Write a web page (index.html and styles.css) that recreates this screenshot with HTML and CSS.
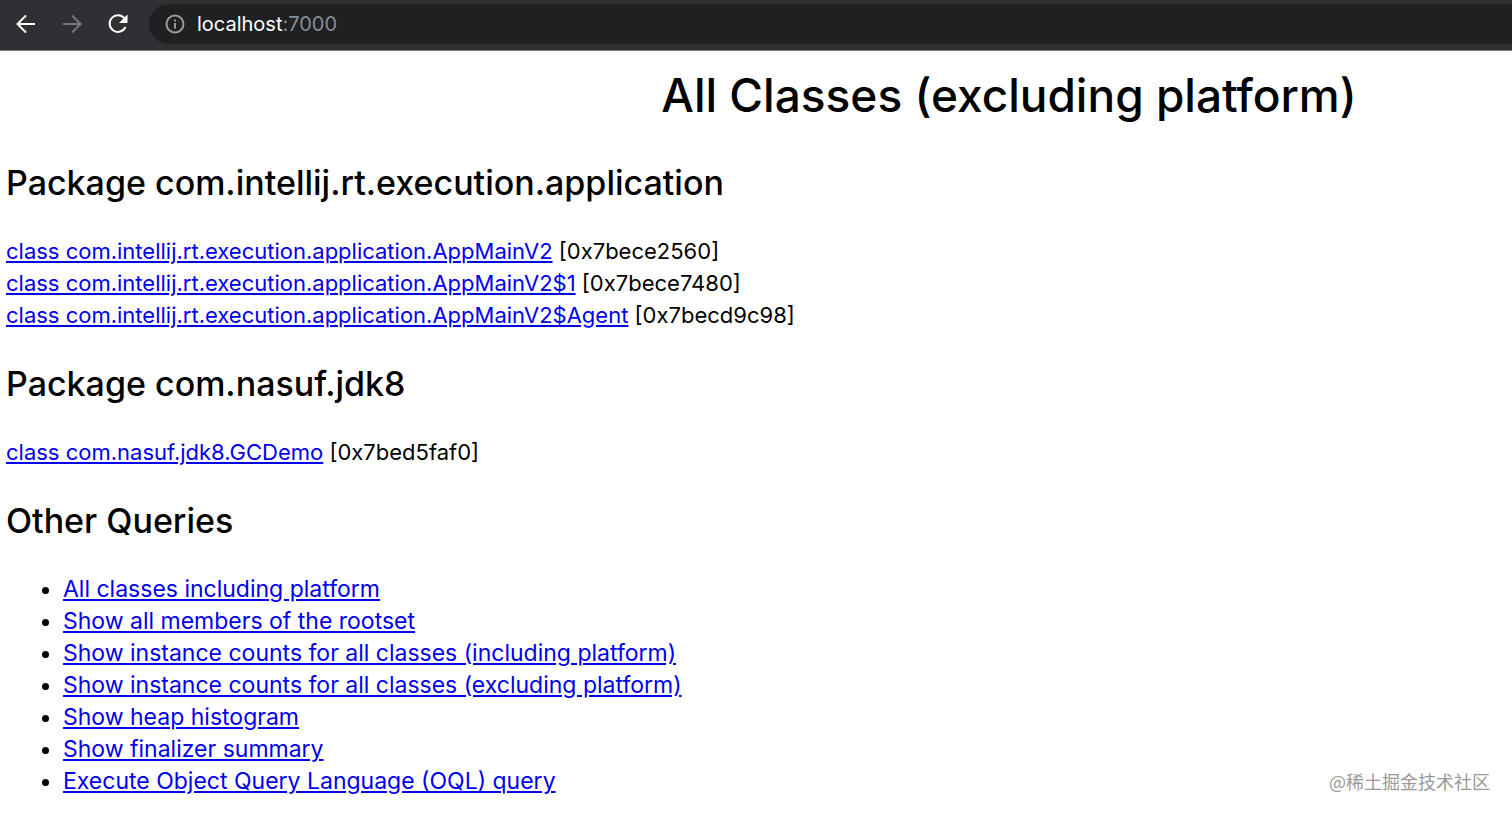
FILE: index.html
```html
<!DOCTYPE html>
<html lang="en">
<head>
    <meta charset="UTF-8">
    <meta name="viewport" content="width=device-width, initial-scale=1.0">
    <title>All Classes (excluding platform)</title>
    <link rel="stylesheet" href="styles.css">
</head>
<body>
    <header class="toolbar">
        <button type="button" class="nav-button" aria-label="Back">
            <svg viewBox="0 0 24 24"><path d="M21 12H4M12 3.500L3.500 12l8.500 8.500"/></svg>
        </button>
        <button type="button" class="nav-button disabled" aria-label="Forward" disabled>
            <svg viewBox="0 0 24 24"><path d="M3 12h17M12 3.500l8.500 8.500-8.500 8.500"/></svg>
        </button>
        <button type="button" class="nav-button" aria-label="Reload">
            <svg viewBox="0 0 24 24"><path d="M18.500 6.500A8.300 8.300 0 1 0 19.500 15"/><path class="solid" d="M21.500 2.500v8.500H13z"/></svg>
        </button>
        <div class="address">
            <svg class="info" viewBox="0 0 20 20"><circle cx="10" cy="10" r="8.500"/><path d="M10 9v5.500M10 5.500v2"/></svg>
            <span class="url">localhost<span class="port">:7000</span></span>
        </div>
    </header>

    <main class="content">
        <h1>All Classes (excluding platform)</h1>

        <h2>Package com.intellij.rt.execution.application</h2>
        <p>
            <a href="#">class com.intellij.rt.execution.application.AppMainV2</a> [0x7bece2560]<br>
            <a href="#">class com.intellij.rt.execution.application.AppMainV2$1</a> [0x7bece7480]<br>
            <a href="#">class com.intellij.rt.execution.application.AppMainV2$Agent</a> [0x7becd9c98]
        </p>

        <h2>Package com.nasuf.jdk8</h2>
        <p><a href="#">class com.nasuf.jdk8.GCDemo</a> [0x7bed5faf0]</p>

        <h2>Other Queries</h2>
        <ul>
            <li><a href="#">All classes including platform</a></li>
            <li><a href="#">Show all members of the rootset</a></li>
            <li><a href="#">Show instance counts for all classes (including platform)</a></li>
            <li><a href="#">Show instance counts for all classes (excluding platform)</a></li>
            <li><a href="#">Show heap histogram</a></li>
            <li><a href="#">Show finalizer summary</a></li>
            <li><a href="#">Execute Object Query Language (OQL) query</a></li>
        </ul>
    </main>

    <div class="watermark">@稀土掘金技术社区</div>
</body>
</html>
```
FILE: styles.css
```css
body {
    margin: 0;
    background: #fff;
    color: #000;
    font-family: Inter, "Noto Sans CJK SC", sans-serif;
    font-size: 22px;
    line-height: 32px;
}
.toolbar {
    display: flex;
    align-items: center;
    height: 51px;
    box-sizing: border-box;
    padding: 0 0 2px 14px;
    border-bottom: 1px solid #77777a;
    background: #303034;
}
.nav-button {
    width: 24px;
    height: 24px;
    margin-right: 22px;
    padding: 0;
    border: 0;
    background: none;
    color: #fff;
}
.nav-button.disabled {
    color: #77787a;
}
svg {
    display: block;
    fill: none;
    stroke: currentColor;
    stroke-width: 2;
}
.solid {
    fill: currentColor;
    stroke: none;
}
.address {
    flex: 1;
    display: flex;
    align-items: center;
    gap: 12px;
    height: 40px;
    margin-left: -3px;
    padding-left: 16px;
    border-radius: 20px 0 0 20px;
    background: #1e2022;
    color: #9a9b9d;
}
.info {
    width: 20px;
    height: 20px;
}
.url {
    color: #fff;
    font-size: 20px;
}
.port {
    color: #8b8c8e;
}
.content {
    padding: 16px 6px 0;
}
h1 {
    margin: 0 0 38px;
    padding-left: 506px;
    text-align: center;
    font-size: 46px;
    font-weight: 500;
    line-height: 56px;
}
h2 {
    margin: 31px 0 30px;
    font-size: 34px;
    font-weight: 500;
    line-height: 44px;
}
p, ul {
    margin: 0;
}
ul {
    padding-left: 57px;
    font-size: 23px;
}
a {
    color: #0000ee;
}
.watermark {
    position: absolute;
    right: 22px;
    bottom: 18px;
    color: #999;
    font-size: 18px;
    font-family: "Noto Sans CJK SC", sans-serif;
}
```
